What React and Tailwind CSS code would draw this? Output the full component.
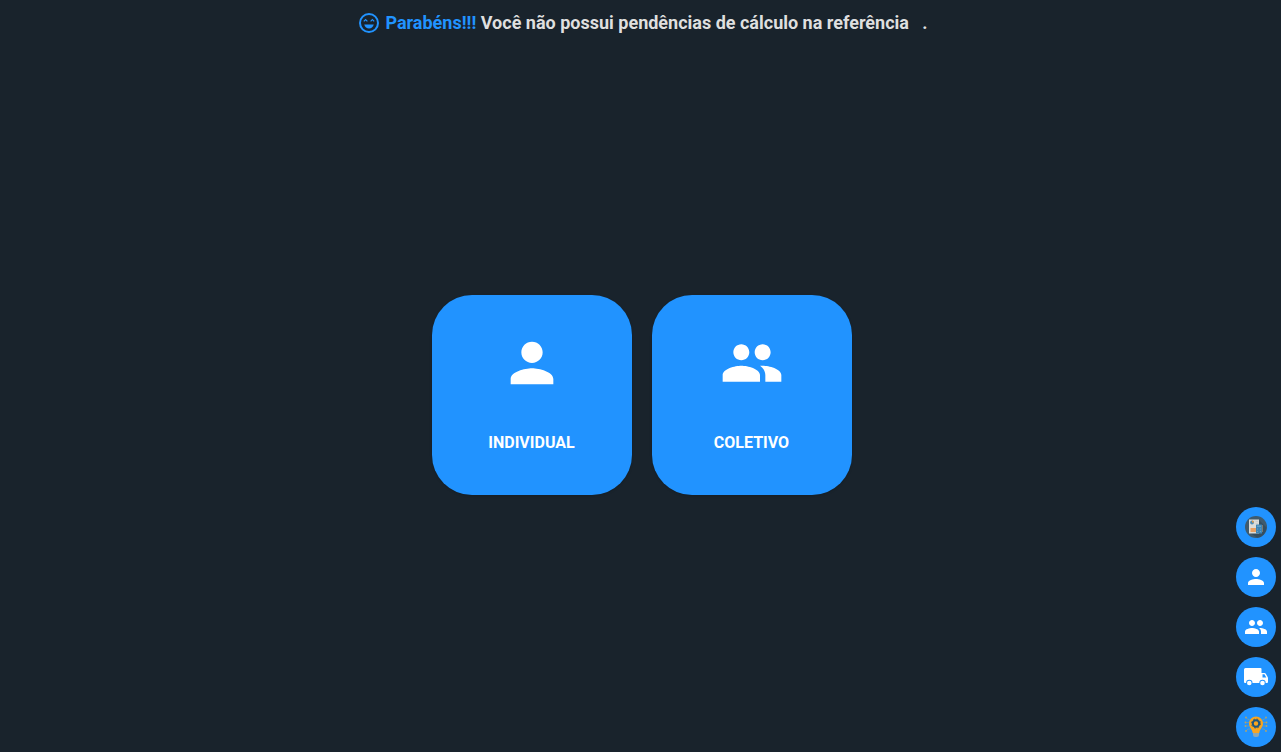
import React from 'react';
import { MdPerson, MdPeople } from 'react-icons/md';

// Rosto feliz ao lado da mensagem
const HappyIcon = () => (
    <svg viewBox="0 0 24 24" className="w-6 h-6 text-[#2193ff]" fill="none" stroke="currentColor" aria-hidden="true">
        <circle cx="12" cy="12" r="9" strokeWidth="2" />
        <path d="M6.800 10.400l1.800-1.800 1.800 1.800M13.600 10.400l1.800-1.800 1.800 1.800" strokeWidth="1.200" />
        <path d="M7.200 13.500h9.600c-.7 2.400-2.600 4-4.800 4s-4.100-1.600-4.800-4z" fill="currentColor" stroke="none" />
    </svg>
);

// Ícone de relatório (folha, gráfico e calculadora)
const ReportIcon = () => (
    <svg viewBox="0 0 24 24" className="w-6 h-6" aria-hidden="true">
        <circle cx="12" cy="12" r="11" fill="#3f5b6e" />
        <path d="M15 5l7.500 7.500a11 11 0 0 1-9 10.300L6 18z" fill="#344e60" />
        <path d="M5 4.500h10v14H5z" fill="#dcdcd8" />
        <circle cx="8" cy="7.500" r="1.900" fill="#4d8db8" />
        <path d="M8 7.500V5.600a1.900 1.900 0 0 1 1.900 1.900z" fill="#ee9a3a" />
        <path d="M11.500 6.500h2.500M11.500 8.500h2.500" stroke="#c9cccc" strokeWidth="0.800" />
        <path d="M6.500 13h6v4h-6z" fill="#e8a163" />
        <rect x="12" y="9.500" width="6" height="9" rx="0.600" fill="#3d84b4" />
        <path d="M13 10.500h4v1.500h-4z" fill="#5f9fc6" />
        <path d="M13 14h1M16 14h1M13 16.500h1M16 16.500h1" stroke="#6aa3c5" strokeWidth="0.900" />
        <path d="M18.500 10v7" stroke="#8b8478" strokeWidth="0.800" />
    </svg>
);

// Ícone de caminhão de entrega
const TruckIcon = () => (
    <svg viewBox="0 0 24 24" className="w-6 h-6" aria-hidden="true">
        <path d="M1.500 3H16.500q1 0 1 1v4h3q.8 0 1.300.7l1.700 3q.5.700.5 1.500V17q0 1-1 1H1q-1 0-1-1V4.500Q0 3 1.500 3z" fill="#fff" />
        <path d="M18.500 9.300h2l1.800 3.100h-3.800z" fill="#2193ff" />
        <circle cx="5.300" cy="18" r="3.200" fill="#2193ff" />
        <circle cx="18.500" cy="18" r="3.200" fill="#2193ff" />
        <circle cx="5.300" cy="18" r="2.300" fill="#fff" />
        <circle cx="18.500" cy="18" r="2.300" fill="#fff" />
    </svg>
);

// Ícone de ideia (lâmpada com engrenagem e circuitos)
const IdeaIcon = () => (
    <svg viewBox="0 0 24 24" className="w-6 h-6" aria-hidden="true">
        <g fill="none" stroke="#6d9cae" strokeWidth="0.900">
            <path d="M5.500 4.500H4L2 2.500M5 7.500H2M5 11H2M6 14H4l-2 2" />
            <path d="M18.500 4.500H20l2-2M19 7.500h3M19 11h3M18 14h2l2 2" />
        </g>
        <g fill="#b5a468">
            <circle cx="2" cy="2.500" r="0.900" />
            <circle cx="1.500" cy="7.500" r="0.900" />
            <circle cx="1.500" cy="11" r="0.900" />
            <circle cx="2" cy="16" r="0.900" />
            <circle cx="22" cy="2.500" r="0.900" />
            <circle cx="22.500" cy="7.500" r="0.900" />
            <circle cx="22.500" cy="11" r="0.900" />
            <circle cx="22" cy="16" r="0.900" />
        </g>
        <path d="M12 1.500A7 7 0 0 0 5 8.500c0 4.300 3.200 5.300 3.700 9.500h6.600c.5-4.200 3.700-5.200 3.700-9.500a7 7 0 0 0-7-7z" fill="#f9a51f" />
        <circle cx="12" cy="8.500" r="3.200" fill="none" stroke="#1d567f" strokeWidth="2" />
        <circle cx="12" cy="8.500" r="4.500" fill="none" stroke="#1d567f" strokeWidth="0.900" strokeDasharray="1.770 1.770" />
        <path d="M9 18h6v2a2 2 0 0 1-2 2h-2a2 2 0 0 1-2-2z" fill="#8ba7b5" />
    </svg>
);

const modes = [
    { key: 'individual', label: 'INDIVIDUAL', Icon: MdPerson },
    { key: 'coletivo', label: 'COLETIVO', Icon: MdPeople },
];

const shortcuts = [
    { key: 'relatorio', title: 'Relatórios', icon: <ReportIcon /> },
    { key: 'individual', title: 'Individual', icon: <MdPerson className="w-6 h-6" /> },
    { key: 'coletivo', title: 'Coletivo', icon: <MdPeople className="w-6 h-6" /> },
    { key: 'transporte', title: 'Transporte', icon: <TruckIcon /> },
    { key: 'ideias', title: 'Ideias', icon: <IdeaIcon /> },
];

const ModeButton = ({ label, Icon }) => (
    <button type="button" className="flex flex-col items-center w-[200px] h-[200px] pt-9 rounded-[40px] bg-[#2193ff] text-white shadow-sm">
        <Icon className="w-16 h-16" />
        <span className="mt-9 text-base font-bold">{label}</span>
    </button>
);

export default function App() {
    return (
        <div className="flex flex-col min-h-screen bg-[#19232c] font-[Roboto,sans-serif]">
            <header className="flex items-center justify-center gap-1 pt-2 pl-1 text-lg leading-[30px] font-bold text-[#dfdfdf]">
                <HappyIcon />
                <p className="whitespace-pre-wrap">
                    <span className="text-[#2193ff]">Parabéns!!!</span> Você não possui pendências de cálculo na referência{'   '}.
                </p>
            </header>

            <main className="flex flex-1 flex-wrap items-center justify-center gap-5 pl-0.5">
                {modes.map(({ key, ...mode }) => <ModeButton key={key} {...mode} />)}
            </main>

            {/* Atalhos flutuantes */}
            <nav className="fixed right-[5px] bottom-[5px] flex flex-col gap-2.5">
                {shortcuts.map(item => (
                    <button key={item.key} type="button" aria-label={item.title} className="flex items-center justify-center w-10 h-10 rounded-full bg-[#2193ff] text-white">
                        {item.icon}
                    </button>
                ))}
            </nav>
        </div>
    );
}
